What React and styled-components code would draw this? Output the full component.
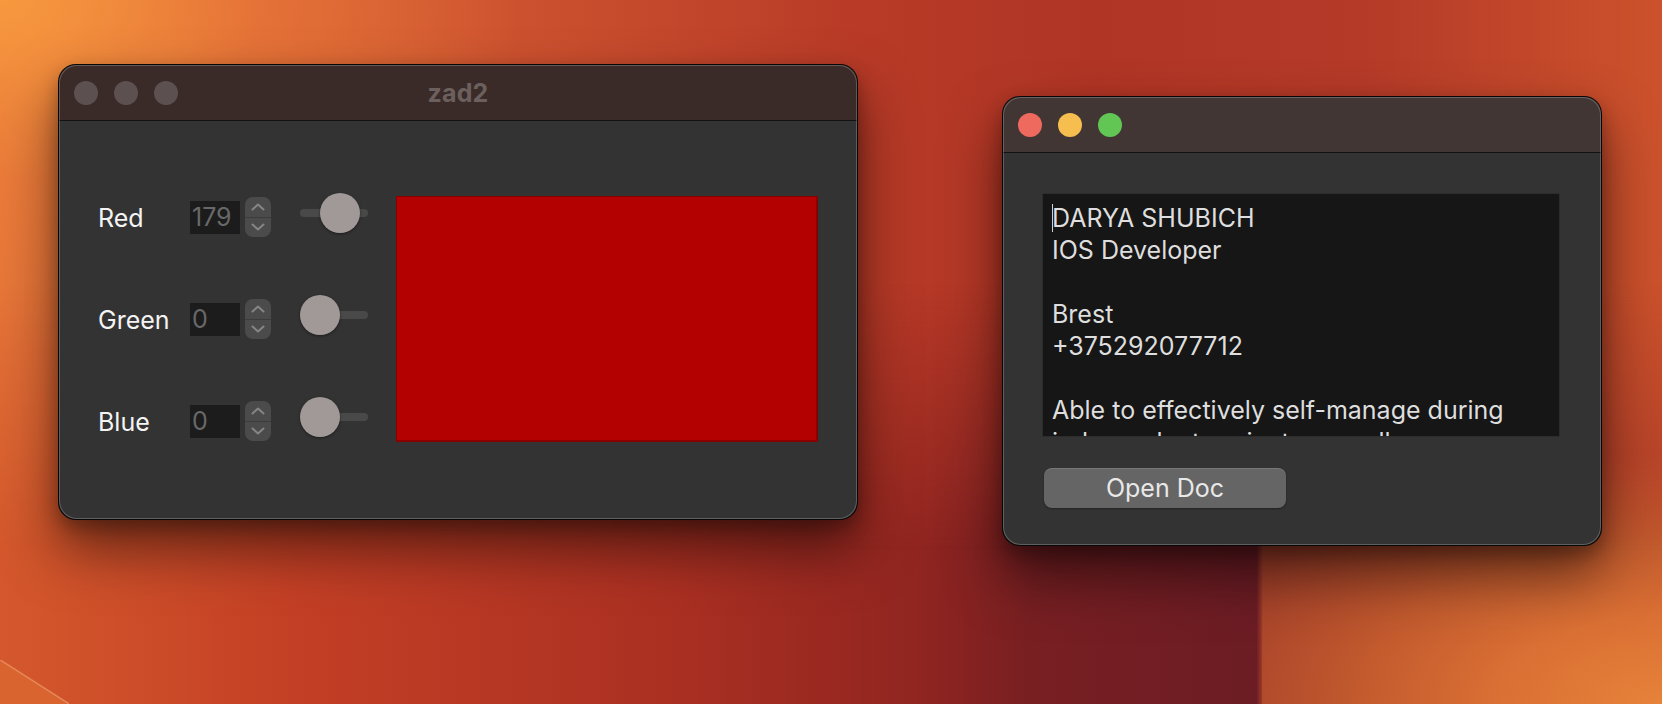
import React from "react";
import styled, { createGlobalStyle } from "styled-components";

const GlobalStyle = createGlobalStyle`
  html, body { margin: 0; padding: 0; }
  body { font-family: Inter, "Liberation Sans", sans-serif; }
  * { box-sizing: border-box; }
`;

const Desktop = styled.div`
  position: relative;
  width: 1662px;
  height: 704px;
  overflow: hidden;
  background:
    linear-gradient(to top right, #d9642f calc(50% - 1px), #ea9060 50%, transparent calc(50% + 1.5px)) left bottom / 69px 44px no-repeat,
    radial-gradient(ellipse 470px 250px at 100% 100%, #e6823a 0%, #da7034 35%, #c25a2e 65%, rgba(170, 62, 40, 0) 100%) right bottom / 400px 704px no-repeat,
    linear-gradient(90deg, #d4582c 0%, #c33f25 18%, #ab3022 40%, #912520 55%, #781f22 62%, #6c1c24 75.6%, #a4402a 76%, #a23a28 88%, #b03e28 100%);

  /* upper part of the wallpaper, fading into the lower folds */
  &::before {
    content: "";
    position: absolute;
    inset: 0;
    background:
      radial-gradient(ellipse 520px 360px at 0% 0%, #f7993f 0%, rgba(240, 128, 58, 0.5) 50%, rgba(230, 110, 50, 0) 100%),
      linear-gradient(90deg, #e57539 0%, #cf5530 28%, #b83a27 52%, #b03525 66%, #b53a28 82%, #cc522c 100%);
    -webkit-mask-image: linear-gradient(to bottom, #000 0%, #000 40%, transparent 78%);
    mask-image: linear-gradient(to bottom, #000 0%, #000 40%, transparent 78%);
  }
`;

const Window = styled.div`
  position: absolute;
  left: ${(p) => p.$x}px;
  top: ${(p) => p.$y}px;
  width: ${(p) => p.$w}px;
  height: ${(p) => p.$h}px;
  display: flex;
  flex-direction: column;
  border-radius: 18px;
  background: #333333;
  border: 1px solid rgba(0, 0, 0, 0.85);
  box-shadow: 0 30px 55px rgba(0, 0, 0, 0.5), 0 8px 18px rgba(0, 0, 0, 0.28);
  overflow: hidden;

  &::after {
    content: "";
    position: absolute;
    inset: 0;
    border-radius: inherit;
    box-shadow: inset 0 0 0 1px rgba(255, 255, 255, 0.22);
    pointer-events: none;
  }
`;

const TitleBar = styled.div`
  height: 56px;
  flex-shrink: 0;
  display: grid;
  grid-template-columns: 1fr auto 1fr;
  align-items: center;
  padding: 0 15px;
  background: ${(p) => p.$tint};
  border-bottom: 1px solid #121212;
`;

const Lights = styled.div`
  display: flex;
  gap: 16px;
`;

const Light = styled.span`
  width: 24px;
  height: 24px;
  border-radius: 50%;
  background: ${(p) => p.$color};
`;

const Title = styled.div`
  font-size: 25px;
  font-weight: 700;
  color: #6c605e;
  letter-spacing: 0.2px;
`;

/* ---------- colour picker window ---------- */

const PickerBody = styled.div`
  flex: 1;
  display: flex;
  align-items: flex-start;
  padding: 76px 39px 0 39px;
`;

const Controls = styled.div`
  display: flex;
  flex-direction: column;
  gap: 62px;
`;

const Row = styled.div`
  display: flex;
  align-items: center;
  height: 40px;
`;

const Label = styled.div`
  width: 92px;
  font-size: 25px;
  color: #f4f4f4;
  padding-top: 2px;
`;

const NumberField = styled.div`
  width: 50px;
  height: 33px;
  background: #1c1c1c;
  color: #686868;
  font-size: 25px;
  padding-left: 2px;
  display: flex;
  align-items: center;
`;

const Stepper = styled.div`
  margin-left: 5px;
  width: 26px;
  height: 40px;
  border-radius: 8px;
  background: #4b4b4b;
  display: flex;
  flex-direction: column;
  overflow: hidden;
`;

const StepHalf = styled.div`
  flex: 1;
  display: flex;
  align-items: center;
  justify-content: center;
  border-top: ${(p) => (p.$lower ? "1px solid #3c3c3c" : "none")};
`;

const Slider = styled.div`
  position: relative;
  margin-left: 29px;
  margin-bottom: 8px;
  width: 68px;
  height: 40px;
`;

const Track = styled.div`
  position: absolute;
  left: 0;
  right: 0;
  top: 16px;
  height: 8px;
  border-radius: 4px;
  background: #494949;
`;

const Thumb = styled.div`
  position: absolute;
  top: 0;
  width: 40px;
  height: 40px;
  border-radius: 50%;
  background: #a19997;
  box-shadow: 0 1px 3px rgba(0, 0, 0, 0.45);
`;

const ColorBox = styled.div`
  margin-left: 28px;
  margin-top: -1px;
  width: 422px;
  height: 246px;
  border: 1px solid #8a0000;
  border-bottom-width: 2px;
  border-right-width: 2px;
`;

/* ---------- document window ---------- */

const DocBody = styled.div`
  flex: 1;
  display: flex;
  flex-direction: column;
  align-items: flex-start;
  padding: 40px 41px 0 39px;
`;

const TextView = styled.div`
  width: 518px;
  height: 244px;
  background: #161616;
  border: 1px solid #2c2c2c;
  padding: 8px 9px;
  overflow: hidden;
  color: #dedede;
  font-size: 25px;
  line-height: 32px;
  white-space: pre-wrap;
`;

const Caret = styled.span`
  display: inline-block;
  width: 1px;
  height: 28px;
  margin-right: -1px;
  vertical-align: -5px;
  background: #d0d0d0;
`;

const Button = styled.button`
  margin-top: 31px;
  margin-left: 2px;
  width: 242px;
  height: 40px;
  border: none;
  border-radius: 8px;
  background: #656565;
  color: #e8e8e8;
  font-family: inherit;
  font-size: 25px;
  box-shadow: inset 0 1px 0 rgba(255, 255, 255, 0.12), 0 1px 2px rgba(0, 0, 0, 0.35);
  cursor: pointer;
`;

const Chevron = ({ up }) => (
  <svg width="14" height="8" viewBox="0 0 14 8">
    <path
      d={up ? "M1.5 6.5 L7 1.5 L12.5 6.5" : "M1.5 1.5 L7 6.5 L12.5 1.5"}
      fill="none"
      stroke="#858585"
      strokeWidth="2"
      strokeLinecap="round"
      strokeLinejoin="round"
    />
  </svg>
);

const channels = [
  { name: "Red", value: 179 },
  { name: "Green", value: 0 },
  { name: "Blue", value: 0 },
];

const resume = `DARYA SHUBICH
IOS Developer

Brest
+375292077712

Able to effectively self-manage during independent projects as well`;

export default function App() {
  const [r, g, b] = channels.map((c) => c.value);
  return (
    <>
      <GlobalStyle />
      <Desktop>
        <Window $x={58} $y={64} $w={800} $h={456}>
          <TitleBar $tint="#3a2b28">
            <Lights>
              <Light $color="#5c5050" />
              <Light $color="#5c5050" />
              <Light $color="#5c5050" />
            </Lights>
            <Title>zad2</Title>
          </TitleBar>
          <PickerBody>
            <Controls>
              {channels.map((c) => (
                <Row key={c.name}>
                  <Label>{c.name}</Label>
                  <NumberField>{c.value}</NumberField>
                  <Stepper>
                    <StepHalf>
                      <Chevron up />
                    </StepHalf>
                    <StepHalf $lower>
                      <Chevron />
                    </StepHalf>
                  </Stepper>
                  <Slider>
                    <Track />
                    <Thumb style={{ left: (c.value / 255) * 28 }} />
                  </Slider>
                </Row>
              ))}
            </Controls>
            <ColorBox style={{ background: `rgb(${r}, ${g}, ${b})` }} />
          </PickerBody>
        </Window>

        <Window $x={1002} $y={96} $w={600} $h={450}>
          <TitleBar $tint="#413634">
            <Lights>
              <Light $color="#ee6a5f" />
              <Light $color="#f5be4f" />
              <Light $color="#62c655" />
            </Lights>
          </TitleBar>
          <DocBody>
            <TextView>
              <Caret />
              {resume}
            </TextView>
            <Button>Open Doc</Button>
          </DocBody>
        </Window>
      </Desktop>
    </>
  );
}
